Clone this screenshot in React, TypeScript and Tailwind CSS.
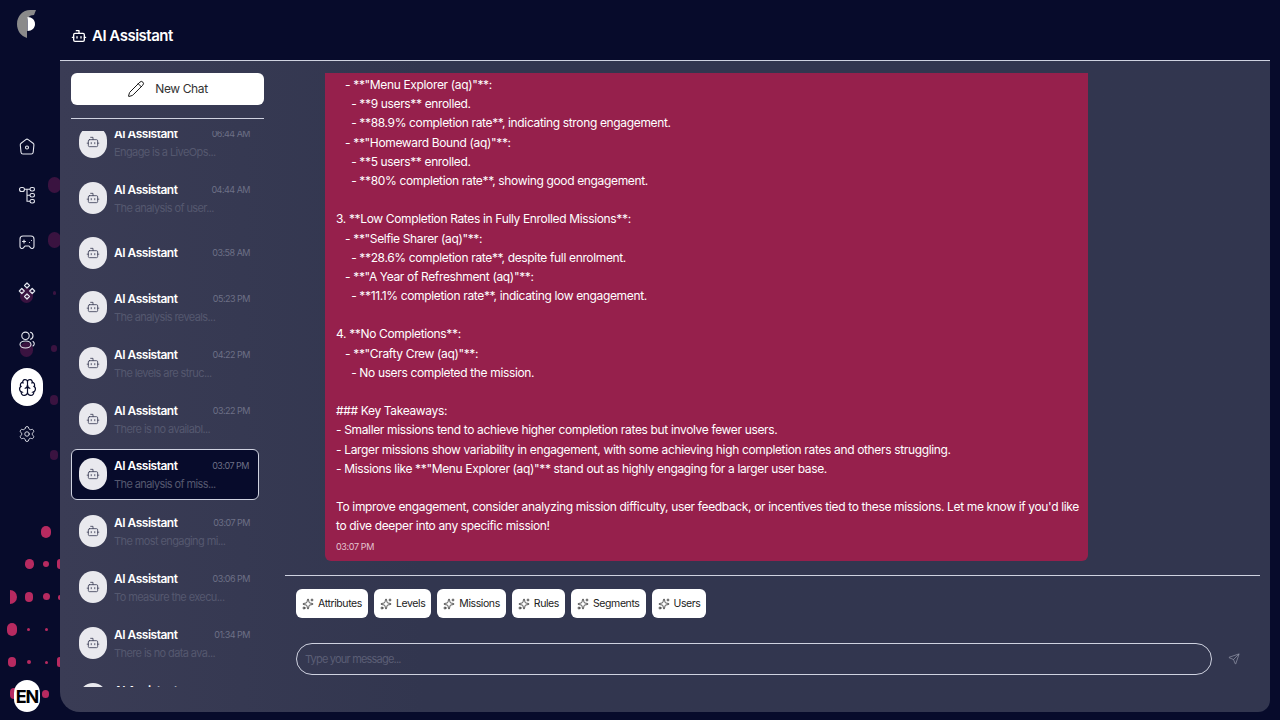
import { Bot, Brain, Pencil, Send, Settings, Sparkles } from "lucide-react";

const chats = [
  { time: "06:44 AM", text: "Engage is a LiveOps..." },
  { time: "04:44 AM", text: "The analysis of user..." },
  { time: "03:58 AM", text: "" },
  { time: "05:23 PM", text: "The analysis reveals..." },
  { time: "04:22 PM", text: "The levels are struc..." },
  { time: "03:22 PM", text: "There is no availabl..." },
  { time: "03:07 PM", text: "The analysis of miss...", active: true },
  { time: "03:07 PM", text: "The most engaging mi..." },
  { time: "03:06 PM", text: "To measure the execu..." },
  { time: "01:34 PM", text: "There is no data ava..." },
  { time: "03:30 PM", text: "The analysis of..." },
];

const lines = [
  "   - **\"Menu Explorer (aq)\"**:",
  "     - **9 users** enrolled.",
  "     - **88.9% completion rate**, indicating strong engagement.",
  "   - **\"Homeward Bound (aq)\"**:",
  "     - **5 users** enrolled.",
  "     - **80% completion rate**, showing good engagement.",
  "",
  "3. **Low Completion Rates in Fully Enrolled Missions**:",
  "   - **\"Selfie Sharer (aq)\"**:",
  "     - **28.6% completion rate**, despite full enrolment.",
  "   - **\"A Year of Refreshment (aq)\"**:",
  "     - **11.1% completion rate**, indicating low engagement.",
  "",
  "4. **No Completions**:",
  "   - **\"Crafty Crew (aq)\"**:",
  "     - No users completed the mission.",
  "",
  "### Key Takeaways:",
  "- Smaller missions tend to achieve higher completion rates but involve fewer users.",
  "- Larger missions show variability in engagement, with some achieving high completion rates and others struggling.",
  "- Missions like **\"Menu Explorer (aq)\"** stand out as highly engaging for a larger user base.",
  "",
  "To improve engagement, consider analyzing mission difficulty, user feedback, or incentives tied to these missions. Let me know if you'd like",
  "to dive deeper into any specific mission!",
];

const chips = ["Attributes", "Levels", "Missions", "Rules", "Segments", "Users"];

// the dotted pattern behind the sidebar
const dots = [
  "left-[41px] top-[526px] w-[10px] h-[12px] bg-[#b72a60]",
  "left-[25px] top-[559px] w-[9px] h-[10px] bg-[#b72a60]",
  "left-[43px] top-[561px] w-[6px] h-[6px] bg-[#b72a60]",
  "left-[57px] top-[559px] w-[6px] h-[10px] bg-[#b72a60]",
  "left-[10px] top-[590px] w-[7px] h-[14px] rounded-l-[2px] bg-[#b72a60]",
  "left-[25px] top-[592px] w-[8px] h-[10px] bg-[#b72a60]",
  "left-[43px] top-[593px] w-[7px] h-[7px] bg-[#b72a60]",
  "left-[58px] top-[595px] w-[4px] h-[5px] bg-[#b72a60]",
  "left-[7px] top-[623px] w-[10px] h-[13px] bg-[#b72a60]",
  "left-[27px] top-[628px] w-[3px] h-[3px] bg-[#b72a60]",
  "left-[45px] top-[628px] w-[3px] h-[3px] bg-[#b72a60]",
  "left-[8px] top-[657px] w-[8px] h-[10px] bg-[#b72a60]",
  "left-[27px] top-[660px] w-[4px] h-[4px] bg-[#b72a60]",
  "left-[45px] top-[661px] w-[3px] h-[3px] bg-[#b72a60]",
  "left-[57px] top-[657px] w-[5px] h-[10px] bg-[#b72a60]",
  "left-[42px] top-[690px] w-[7px] h-[8px] bg-[#b72a60]",
  "left-[10px] top-[688px] w-[8px] h-[11px] bg-[#b72a60]",
  "left-[48px] top-[177px] w-[13px] h-[16px] bg-[#3a1340]",
  "left-[48px] top-[232px] w-[13px] h-[16px] bg-[#3a1340]",
  "left-[20px] top-[288px] w-[13px] h-[15px] bg-[#3a1340]",
  "left-[53px] top-[291px] w-[3px] h-[4px] bg-[#3a1340]",
  "left-[20px] top-[342px] w-[13px] h-[15px] bg-[#3a1340]",
  "left-[51px] top-[345px] w-[6px] h-[7px] bg-[#3a1340]",
  "left-[50px] top-[395px] w-[8px] h-[10px] bg-[#3a1340]",
  "left-[50px] top-[450px] w-[8px] h-[10px] bg-[#3a1340]",
];

const HomeIcon = () => (
  <svg width="18" height="18" viewBox="0 0 18 18" fill="none" stroke="currentColor" strokeWidth="1.1" strokeLinejoin="round">
    <path d="M7.8 1.6a2 2 0 0 1 2.4 0l4.9 3.6a2 2 0 0 1 .8 1.8l-.7 7.2a2 2 0 0 1-2 1.8H5a2 2 0 0 1-2-1.800l-.7-7.200a2 2 0 0 1 .8-1.800z" />
    <circle cx="9" cy="9.500" r="1.500" />
  </svg>
);

const TreeIcon = () => (
  <svg width="18" height="18" viewBox="0 0 18 18" fill="none" stroke="currentColor" strokeWidth="1.1">
    <rect x="1.500" y="1.500" width="5" height="4" rx="2" />
    <rect x="12" y="1.500" width="4.500" height="3.500" rx="1.700" />
    <rect x="12" y="7.500" width="4.500" height="3.500" rx="1.700" />
    <rect x="12" y="13.500" width="4.500" height="3.500" rx="1.700" />
    <path d="M6.500 3.300H12M9 3.300V15.200H12M9 9.200H12" />
  </svg>
);

const PadIcon = () => (
  <svg width="18" height="18" viewBox="0 0 18 18" fill="none" stroke="currentColor" strokeWidth="1.1" strokeLinejoin="round" strokeLinecap="round">
    <path d="M5 3h8a3 3 0 0 1 3 3v7.500a2 2 0 0 1-3.600 1.200L11 13H7l-1.400 1.700A2 2 0 0 1 2 13.500V6a3 3 0 0 1 3-3z" />
    <path d="M4.500 8.500h3M6 7v3M11.500 9.500h.01M13.500 7.500h.01" />
  </svg>
);

const DiamondsIcon = () => (
  <svg width="18" height="18" viewBox="0 0 18 18" fill="none" stroke="currentColor" strokeWidth="1.2" strokeLinejoin="round">
    <path d="M9 1l2.500 2.500L9 6 6.500 3.500z" />
    <path d="M9 12l2.500 2.500L9 17l-2.500-2.500z" />
    <path d="M3.800 6.500l2.500 2.500-2.500 2.500L1.300 9z" />
    <path d="M14.200 6.500l2.500 2.500-2.500 2.500L11.700 9z" />
  </svg>
);

const PeopleIcon = () => (
  <svg width="18" height="18" viewBox="0 0 18 18" fill="none" stroke="currentColor" strokeWidth="1.1" strokeLinecap="round">
    <circle cx="7.500" cy="4.800" r="3.700" />
    <ellipse cx="7.500" cy="13.500" rx="5.500" ry="3.500" />
    <path d="M12.500 1.300a3.700 3.700 0 0 1 0 7M15 10.500c1.700 1.200 1.700 3.300 0 4.500" />
  </svg>
);

const Logo = () => (
  <svg width="20" height="28" viewBox="0 0 20 28">
    <path d="M19 0L17 5C12 5 10 8 10 12L10 28C4 26 0 21 0 14C0 6 6 0 13 0Z" fill="#8a8a8a" />
    <path d="M10.500 7C15 7 18 10 18 14C18 18 15 21 10.500 21Z" fill="#ffffff" />
  </svg>
);

export default function App() {
  return (
    <div className="relative flex h-[720px] w-[1280px] overflow-hidden bg-[#070b2b] text-white" style={{ fontFamily: "Inter, sans-serif" }}>
      {dots.map((d) => (
        <span key={d} className={`absolute rounded-full ${d}`} />
      ))}
      <aside className="relative flex w-[60px] shrink-0 flex-col items-center pr-[6px] pt-[10px]">
        <Logo />
        <div className="mt-[100px] flex flex-col items-center text-[#e4e6ee]">
          <HomeIcon />
          <div className="mt-[30px]"><TreeIcon /></div>
          <div className="mt-[29px]"><PadIcon /></div>
          <div className="mt-[31px]"><DiamondsIcon /></div>
          <div className="mt-[31px]"><PeopleIcon /></div>
          <div className="mt-[19px] flex h-[38px] w-[32px] items-center justify-center rounded-full bg-white">
            <Brain size={19} strokeWidth={1.5} className="text-[#070b2b]" />
          </div>
          <Settings size={18} strokeWidth={1.2} className="mt-[19px]" />
        </div>
        <div className="absolute left-[14px] top-[680px] flex h-[32px] w-[26px] items-center justify-center rounded-full bg-white text-[18px] font-bold tracking-[-1px] text-black">EN</div>
      </aside>

      <main className="relative flex min-w-0 flex-1 flex-col pr-[10px] pb-[8px]">
        <header className="flex h-[60px] shrink-0 items-center gap-[5px] pl-[11px] pt-[12px]">
          <Bot size={16} />
          <span className="text-[15px] font-semibold tracking-[-0.5px]">AI Assistant</span>
        </header>
        <section className="flex min-h-0 flex-1 rounded-br-[12px] rounded-bl-[20px] border-t border-[#cfd2e0] bg-gradient-to-r from-[#3a3c55] to-[#32364f] to-30%">
          <div className="flex w-[225px] shrink-0 flex-col pl-[11px] pt-[12px]">
            <button className="flex h-[32px] w-[193px] items-center justify-center gap-[10px] rounded-[6px] bg-white text-[12px] tracking-[-0.4px] text-[#333]">
              <Pencil size={18} strokeWidth={1.2} className="text-black" />
              New Chat
            </button>
            <div className="mt-[13px] h-px w-[193px] bg-[#cfd2e0]" />
            <div className="mt-[12px] h-[556px] w-[193px] overflow-hidden">
              <div className="mt-[-14px] flex flex-col">
                {chats.map((c, i) => (
                  <div
                    key={i}
                    className={`flex w-[188px] shrink-0 rounded-[6px] pr-[9px] ${i === 0 ? "" : c.active ? "mt-[5px]" : "mt-[6px]"} ${c.active ? "h-[51px] items-start border border-[#cfd2e0] bg-[#070b2b] pl-[7px] pt-[7px]" : c.text ? "h-[50px] items-start pl-[8px] pt-[8px]" : "h-[47px] items-center pl-[8px]"}`}
                  >
                    <div className={`flex h-[32px] w-[28px] shrink-0 items-center justify-center rounded-full bg-[#e9e9ee] ${c.text ? "mt-px" : ""}`}>
                      <Bot size={14} strokeWidth={1.4} className="text-[#3a3c55]" />
                    </div>
                    <div className="ml-[7px] min-w-0 flex-1">
                      <div className="flex items-center justify-between">
                        <span className="text-[12px] font-semibold leading-[18px] tracking-[-0.5px]">AI Assistant</span>
                        <span className="text-[9px] tracking-[-0.5px] text-[#6d7086]">{c.time}</span>
                      </div>
                      {c.text && <p className="text-[11px] leading-[18px] tracking-[-0.6px] text-[#55586f]">{c.text}</p>}
                    </div>
                  </div>
                ))}
              </div>
            </div>
          </div>

          <div className="flex min-w-0 flex-1 flex-col">
            <div className="ml-[40px] mt-[12px] h-[488px] w-[763px] overflow-hidden rounded-b-[6px] bg-[#96204c] pl-[11px] pt-[2px] text-[12px] leading-[19.2px] tracking-[-0.35px]">
              <div className="whitespace-pre">
                {lines.map((l, i) => (
                  <div key={i} className="h-[19.2px]">{l}</div>
                ))}
              </div>
              <div className="mt-px text-[9px] text-[#e4c3cf]">03:07 PM</div>
            </div>
            <div className="mr-[10px] mt-[14px] h-px bg-[#cfd2e0]" />
            <div className="ml-[11px] mt-[13px] flex gap-[6px]">
              {chips.map((c) => (
                <div key={c} className="flex h-[29px] items-center gap-[4px] rounded-[6px] bg-white px-[6px] text-[10.5px] tracking-[-0.4px] text-[#222]">
                  <Sparkles size={12} strokeWidth={1.3} className="text-black" />
                  {c}
                </div>
              ))}
            </div>
            <div className="ml-[11px] mt-[25px] flex items-center">
              <div className="flex h-[32px] w-[916px] items-center rounded-full border border-[#cfd2e0] px-[8px] text-[11px] tracking-[-0.8px] text-[#5b5e75]">Type your message...</div>
              <Send size={12} strokeWidth={1.2} className="ml-[16px] text-[#a5a8b8]" />
            </div>
          </div>
        </section>
      </main>
    </div>
  );
}
